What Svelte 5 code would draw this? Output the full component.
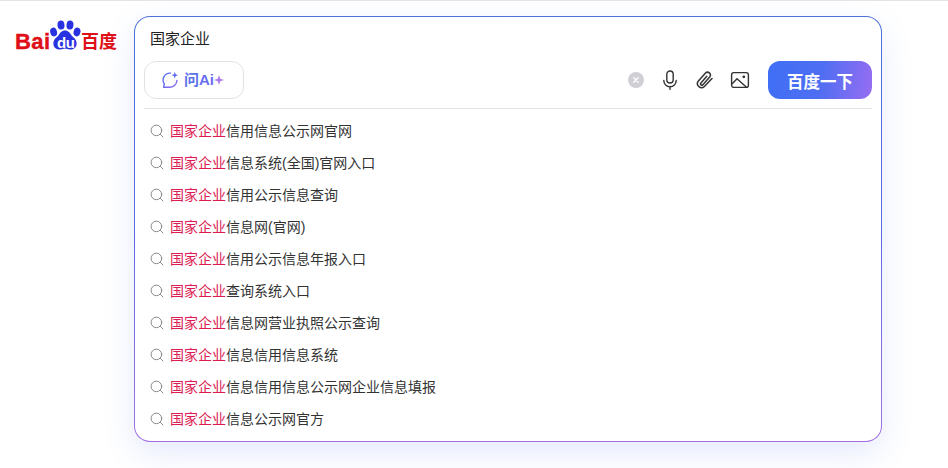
<script>
	const query = '国家企业';
	const suggestions = [
		'信用信息公示网官网',
		'信息系统(全国)官网入口',
		'信用公示信息查询',
		'信息网(官网)',
		'信用公示信息年报入口',
		'查询系统入口',
		'信息网营业执照公示查询',
		'信息信用信息系统',
		'信息信用信息公示网企业信息填报',
		'信息公示网官方'
	];
</script>

<div class="page">
	<div class="logo" aria-label="百度">
		<span class="bai">Bai</span>
		<span class="paw">
			<svg width="32" height="32" viewBox="0 0 32 32">
				<ellipse cx="4.6" cy="13" rx="3.4" ry="4.4" transform="rotate(-14 4.6 13)" fill="#2932e1" />
				<ellipse cx="12" cy="6" rx="3.5" ry="4.6" transform="rotate(-5 12 6)" fill="#2932e1" />
				<ellipse cx="21" cy="6" rx="3.5" ry="4.6" transform="rotate(5 21 6)" fill="#2932e1" />
				<ellipse cx="28" cy="13" rx="3.4" ry="4.4" transform="rotate(14 28 13)" fill="#2932e1" />
				<path d="M16 11.500c-3.400 0-5 2.600-6.600 5-1.600 2-5 3.600-5 8 0 4 3 6 6.600 6 2.400 0 3.400-.9 5-.9s2.600.9 5 .9c3.600 0 6.600-2 6.600-6 0-4.400-3.400-6-5-8-1.600-2.400-3.200-5-6.600-5z" fill="#2932e1" />
			</svg>
			<span class="du">du</span>
		</span>
		<span class="bd">百度</span>
	</div>

	<div class="box">
		<div class="query">{query}</div>
		<div class="toolbar">
			<button class="ask">
				<svg width="18" height="18" viewBox="0 0 18 18" fill="none">
					<defs>
						<linearGradient id="askg" x1="0" y1="0" x2="1" y2="1">
							<stop offset="0" stop-color="#4e6ef2" />
							<stop offset="1" stop-color="#8a6cf5" />
						</linearGradient>
					</defs>
					<path d="M9.500 2.100A7 7 0 0 0 3.300 13L2.600 16.200H9A7 7 0 0 0 15.900 9.500" stroke="url(#askg)" stroke-width="1.400" stroke-linecap="round" stroke-linejoin="round" />
					<path d="M13.800 1l.9 2.300 2.300.9-2.300.9-.9 2.300-.9-2.300-2.300-.9 2.300-.9z" fill="#5a6cf3" />
				</svg>
				<span class="ask-text">问<b>Ai</b></span>
				<svg class="spark" width="10" height="10" viewBox="0 0 10 10">
					<path d="M5 0l1.200 3.800L10 5 6.200 6.200 5 10 3.800 6.200 0 5l3.800-1.200z" fill="#a878ec" />
				</svg>
			</button>

			<div class="tools">
				<span class="clear">
					<svg width="16" height="16" viewBox="0 0 16 16">
						<circle cx="8" cy="8" r="8" fill="#d0d0d4" />
						<path d="M5.800 5.800l4.400 4.400M10.200 5.800l-4.400 4.400" stroke="#fff" stroke-width="1.300" stroke-linecap="round" />
					</svg>
				</span>
				<svg width="20" height="20" viewBox="0 0 20 20" fill="none" stroke="#333" stroke-width="1.400" stroke-linecap="round">
					<rect x="6.800" y="1" width="6.400" height="12" rx="3.200" />
					<path d="M3.800 10.500a6.200 6.200 0 0 0 12.400 0M10 16.700v2.600" />
				</svg>
				<svg width="20" height="20" viewBox="0 0 20 20" fill="none" stroke="#333" stroke-width="1.500" stroke-linecap="round">
					<path d="M18 8.500l-7.600 8a4.100 4.100 0 0 1-6.200-5.300l7.300-8.200a2.900 2.900 0 0 1 4.400 3.700l-7 8a1.300 1.300 0 0 1-2-1.700l5.900-6.700" />
				</svg>
				<svg class="pic" width="20" height="20" viewBox="0 0 20 20" fill="none" stroke="#333" stroke-width="1.400">
					<rect x="1.600" y="2.600" width="16.800" height="14.800" rx="2.200" />
					<path d="M2 14l5-5.200 9.500 8.400" />
					<circle cx="13.800" cy="6.800" r="1.400" fill="#333" stroke="none" />
				</svg>
			</div>

			<button class="go"><span>百度一下</span></button>
		</div>

		<ul class="list">
			{#each suggestions as rest}
				<li>
					<svg width="14" height="14" viewBox="0 0 14 14" fill="none" stroke="#888" stroke-width="1" stroke-linecap="round">
						<circle cx="6.400" cy="6.400" r="5.300" />
						<path d="M10.400 10.400l2.600 2.600" />
					</svg>
					<span><em>{query}</em>{rest}</span>
				</li>
			{/each}
		</ul>
	</div>
</div>

<style>
	:global(body) {
		margin: 0;
		background: #fff;
		overflow: hidden;
	}

	.page {
		width: 948px;
		height: 468px;
		box-sizing: border-box;
		border-top: 1px solid #e4e4e4;
		padding: 15px 0 0 14px;
		display: flex;
		align-items: flex-start;
		font-family: "Liberation Sans", "Noto Sans CJK SC", sans-serif;
		overflow: hidden;
	}

	/* logo */
	.logo {
		width: 120px;
		height: 34px;
		margin-top: 3px;
		display: flex;
		align-items: flex-end;
		color: #de0f17;
		flex: none;
	}

	.bai {
		font-size: 22px;
		line-height: 24px;
		font-weight: 700;
		letter-spacing: 0.4px;
		-webkit-text-stroke: 0.4px #de0f17;
		width: 35px;
		margin-bottom: -1px;
		padding-left: 1px;
		box-sizing: border-box;
	}

	.paw {
		position: relative;
		width: 32px;
		height: 34px;
		flex: none;
	}

	.paw svg {
		position: absolute;
		left: 0;
		top: 0;
	}

	.du {
		position: absolute;
		left: 8px;
		top: 15px;
		color: #fff;
		font-size: 15px;
		line-height: 18px;
		font-weight: 700;
		letter-spacing: -0.5px;
	}

	.bd {
		font-size: 18px;
		line-height: 24px;
		font-weight: 700;
		font-family: "Noto Sans CJK SC", sans-serif;
		margin-bottom: 1px;
	}

	/* search box */
	.box {
		width: 748px;
		height: 426px;
		box-sizing: border-box;
		flex: none;
		padding: 0 9px;
		border: 1px solid transparent;
		border-radius: 16px;
		background:
			linear-gradient(#fff, #fff) padding-box,
			linear-gradient(180deg, #4e72d8 0%, #5a6ee0 50%, #a56ee0 100%) border-box;
		box-shadow: 0 12px 32px rgba(78, 110, 242, 0.14);
	}

	.query {
		height: 42px;
		padding: 10px 0 0 6px;
		box-sizing: border-box;
		font-size: 15px;
		line-height: 23px;
		color: #222;
	}

	.toolbar {
		display: flex;
		align-items: center;
		height: 40px;
		margin-top: 1px;
	}

	.ask {
		width: 100px;
		height: 38px;
		box-sizing: border-box;
		display: flex;
		align-items: center;
		padding: 0 0 0 16px;
		gap: 5px;
		background: #fff;
		border: 1px solid #e2e2e6;
		border-radius: 12px;
		font-family: inherit;
	}

	.ask-text {
		font-size: 15px;
		font-weight: 700;
		line-height: 18px;
		color: #5a72ea;
	}

	.ask-text b {
		color: #6a6ef0;
	}

	.spark {
		margin-left: -5px;
	}

	.tools {
		margin-left: auto;
		display: flex;
		align-items: center;
		gap: 14px;
		margin-right: 18px;
	}

	.clear {
		display: flex;
		margin-right: 2px;
	}

	.pic {
		margin-left: 2px;
	}

	.go {
		width: 104px;
		height: 38px;
		border: none;
		border-radius: 12px;
		color: #fff;
		background: linear-gradient(100deg, #3f6ff5 0%, #4e6ef2 50%, #976df2 100%);
		font-family: "Noto Sans CJK SC", sans-serif;
		font-size: 16.5px;
		font-weight: 700;
		padding: 2px 0 0;
	}

	.list {
		list-style: none;
		margin: 8px 0 0;
		padding: 5px 0 0 6px;
		border-top: 1px solid #e2e2e2;
	}

	.list li {
		height: 32px;
		display: flex;
		align-items: center;
		gap: 6px;
		font-size: 14px;
		color: #333;
	}

	.list li svg {
		flex: none;
		margin-top: 2px;
	}

	.list em {
		font-style: normal;
		color: #dd1b53;
	}
</style>
